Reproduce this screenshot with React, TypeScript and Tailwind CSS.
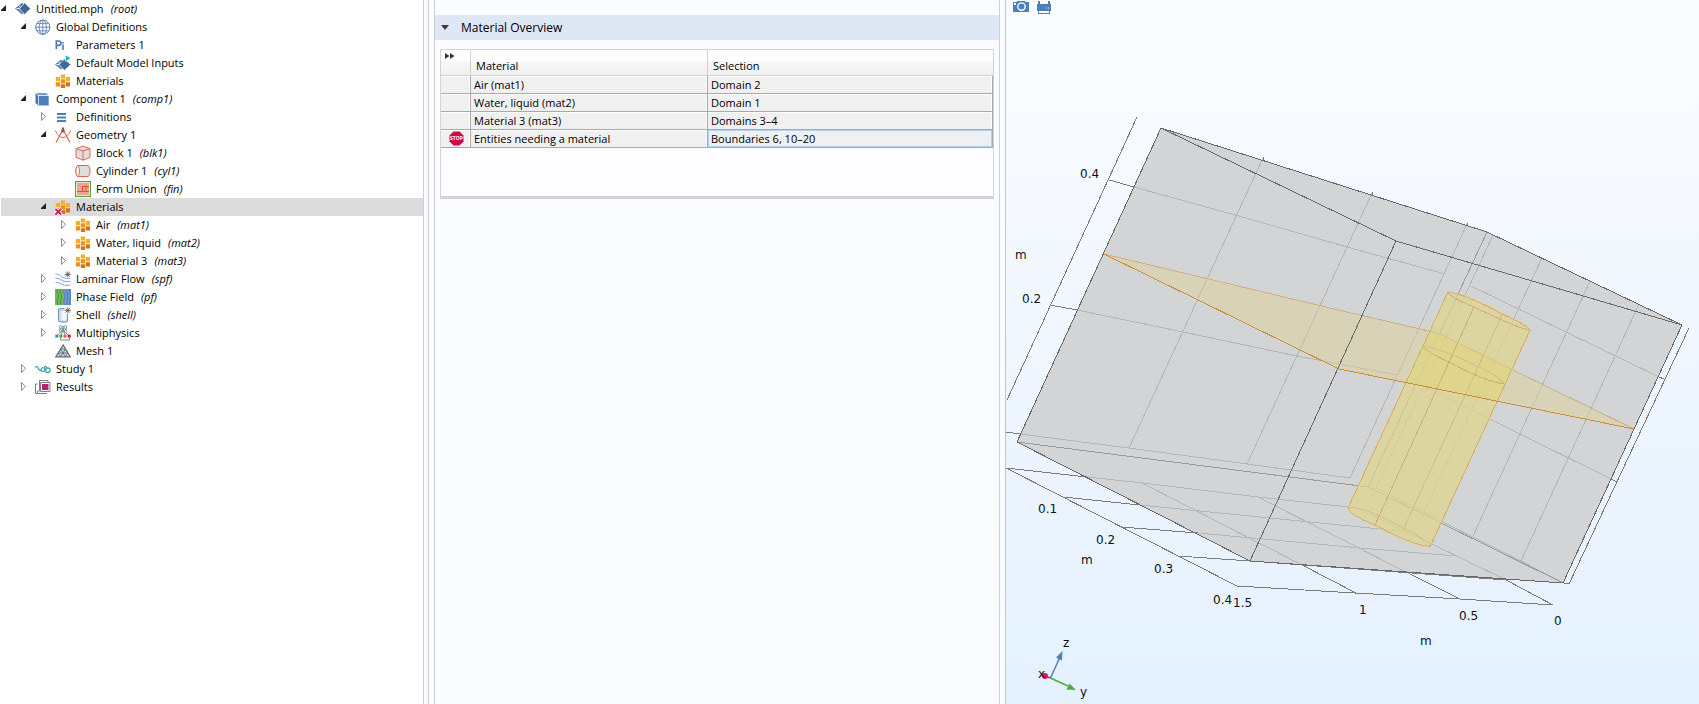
import type { ReactNode } from "react";

type NodeState = "open" | "closed" | "leaf";

interface TreeNode {
  level: 0 | 1 | 2 | 3;
  state: NodeState;
  icon: ReactNode;
  label: string;
  tag?: string;
  selected?: boolean;
}

const INDENT = ["pl-0", "pl-5", "pl-10", "pl-15"];

function Icon({ children }: { children: ReactNode }) {
  return (
    <svg aria-hidden="true" viewBox="0 0 16 16" className="size-4 shrink-0">
      {children}
    </svg>
  );
}

const RootIcon = (
  <Icon>
    <path d="M0 7.500 7 1.800l3 2.300-3.800 3.400L10 11l-3 2.600z" fill="#5d80ae" />
    <path d="M1.500 7.500h5.500M4.200 4.800l4.300 5.400" stroke="#fff" strokeWidth="1" />
    <path d="m9.600 1.800 6 5.900-6 5.900-5.200-5.900z" fill="#3f6799" stroke="#fff" strokeWidth=".7" />
  </Icon>
);

const GlobeIcon = (
  <Icon>
    <g fill="none" stroke="#6b8dba" strokeWidth="1">
      <circle cx="7.800" cy="8.200" r="7.100" stroke="#5179ae" />
      <ellipse cx="7.800" cy="8.200" rx="3.600" ry="7.100" />
      <path d="M7.800 1v14.400M.8 8.200h14M2 4.600h11.600M2 11.800h11.600" />
    </g>
  </Icon>
);

const ParametersIcon = (
  <Icon>
    <g fill="none" stroke="#4a7ab5" strokeWidth="1.600">
      <path d="M1.300 12V4h2.200c3.300 0 3.300 4.400 0 4.400H1.300" />
      <path d="M8 7.600V13" />
    </g>
    <path d="M7.200 5h1.600v1.400H7.200z" fill="#4a7ab5" />
  </Icon>
);

const ModelInputsIcon = (
  <Icon>
    <path d="M0 9.600 6.200 4.400l2.400 2L5.600 9.500l3 3-2.400 2z" fill="#5d80ae" />
    <path d="M1.500 9.500h5M4 7l3 5" stroke="#fff" />
    <path d="m9.300 4 6.400 5.600-6.400 5.700-5-5.700z" fill="#3f6799" stroke="#fff" strokeWidth=".5" />
    <path d="M10.500 0v6.600L16 3.200z" fill="#20b2c0" stroke="#fff" strokeWidth=".5" />
  </Icon>
);

function MaterialBlocks() {
  return (
    <g>
      <path d="M.8 4h4.300v4.200H.8zM5.800 1.500h4.300v4H5.800zM10.800 4H15v4.200h-4.200z" fill="#f9ae22" />
      <path d="M.8 9.200h4.300v4.200H.8zM5.800 6.300h4.300v4.200H5.800z" fill="#f08f1e" />
      <path d="M5.800 11.300h4.300V15H5.800zM10.800 9.200H15v4.200h-4.200z" fill="#cf761a" />
    </g>
  );
}

const MaterialsIcon = (
  <Icon>
    <MaterialBlocks />
  </Icon>
);

const MaterialsErrorIcon = (
  <Icon>
    <MaterialBlocks />
    <path d="M0 9.500l6.500 6.500M6.500 9.500L0 16" stroke="#fff" strokeWidth="3.600" />
    <path d="M.4 9.800l5.800 5.800M6.200 9.800L.4 15.600" stroke="#d0105a" strokeWidth="1.800" />
  </Icon>
);

const ComponentIcon = (
  <Icon>
    <path d="M.5 2h10.300l2.500 2H3.500L.5 2z" fill="#6d9bca" />
    <path d="M.5 2.500 3 4.600v9.700L.5 12z" fill="#4179b0" />
    <path d="M3.700 4.800h10v9.700h-10z" fill="#4b81bb" />
  </Icon>
);

const DefinitionsIcon = (
  <Icon>
    <path d="M2 4h9v2H2zM2 7.500h9v2H2zM2 11h9v2H2z" fill="#4b7fb8" />
  </Icon>
);

const GeometryIcon = (
  <Icon>
    <g fill="none" stroke="#e0664a" strokeWidth="1.200">
      <path d="M7.500 3.500 1 15.500M8.500 3.500 15 15.500" />
      <path d="M.5 3.500C2 8 5 10.500 8 10.500s6-2.500 7.500-7" strokeWidth="1" />
    </g>
    <path d="M7 .5h2v1.600l1 1.500L8 6 6 3.600l1-1.500z" fill="#8a5a50" />
  </Icon>
);

const BlockIcon = (
  <Icon>
    <path d="M1 3.600 8 1.200l7 2.400v8.800l-7 2.800-7-2.800z" fill="#dedede" stroke="#e0664a" strokeWidth="1" />
    <path d="M1 3.600 8 6l7-2.400M8 6v9.200" fill="none" stroke="#e0664a" strokeWidth="1" />
  </Icon>
);

const CylinderIcon = (
  <Icon>
    <path d="M2.700 2.500h10.600c2.300 2.500 2.300 8.500 0 11H2.700C.2 11 .2 5 2.700 2.500z" fill="#dedede" stroke="#e0664a" strokeWidth="1" />
    <path d="M2.700 2.500c2.400 2.500 2.400 8.500 0 11C.2 11 .2 5 2.700 2.500z" fill="#fff" stroke="#e0664a" strokeWidth="1" />
  </Icon>
);

const UnionIcon = (
  <Icon>
    <path d="M.6.6h14.800v14.800H.6z" fill="#fff" stroke="#56a63f" strokeWidth="1.200" />
    <path d="M2 2h12v12H2z" fill="#f0a593" />
    <path d="M14 5.500H7.500v5H14M2 10.500h9V4.500" fill="none" stroke="#dd5238" strokeWidth="1" />
  </Icon>
);

const AsteriskMark = (
  <path
    d="M12.800.4v6M10.600 1.300l4.300 4.200M10.600 5.500l4.300-4.200M9.700 3.400h6.200"
    stroke="#5a5a5a"
    strokeWidth=".9"
  />
);

const LaminarIcon = (
  <Icon>
    <g fill="none" stroke="#7fa9dc" strokeWidth="1">
      <path d="M.5 3c4-.4 5 3 8.500 4 2 .6 4 .8 6.500.3M.5 7.300c4-.6 5 2.200 8.500 3 2 .4 4 .4 6.500 0M.5 11.500c4-.6 5 1.800 8.500 2.600 2 .4 4 .4 6.500 0" />
    </g>
    {AsteriskMark}
  </Icon>
);

const PhaseIcon = (
  <Icon>
    <path d="M0 0h9c-3 4 2 5 0 9-1 3-1 4 0 7H0z" fill="#6ebb59" />
    <path d="M9 0h7v16H9c-1-3-1-4 0-7 2-4-3-5 0-9z" fill="#6d9bd6" />
    <g fill="none" strokeWidth=".8">
      <path d="M3 0c-3 4 2 5 0 9-1 3-1 4 0 7M6.200 0c-3 4 2 5 0 9-1 3-1 4 0 7" stroke="#3d7f3a" />
      <path d="M9.400 0c-3 4 2 5 0 9-1 3-1 4 0 7M12.500 0c-3 4 2 5 0 9-1 3-1 4 0 7M15.300 0c-3 4 2 5 0 9-1 3-1 4 0 7" stroke="#44699f" />
    </g>
  </Icon>
);

const ShellIcon = (
  <Icon>
    <path d="M3.500 3c0-2.200 9-2.200 9 0v10.500c0 2.200-9 2.200-9 0z" fill="#cfdcec" stroke="#7898c2" strokeWidth="1.200" />
    <path d="M6.500 4v8c1.500 2 4 1.500 5.200.5V4z" fill="#f4f8fd" />
    <path d="M9.500 0H16v7H9.500z" fill="#fff" />
    {AsteriskMark}
  </Icon>
);

const MultiphysicsIcon = (
  <Icon>
    <g fill="none" stroke="#7f8b93" strokeWidth=".9">
      <ellipse cx="8" cy="4" rx="4.500" ry="2" transform="rotate(35 8 4)" />
      <ellipse cx="8" cy="4" rx="4.500" ry="2" transform="rotate(-35 8 4)" />
      <path d="M8 5 1.800 11M8 5 6 11M8 5l2.500 6M8 5l6 6" />
    </g>
    <circle cx="8" cy="4" r="1.500" fill="#5aa08c" />
    <path d="M.3 9.600h3v3h-3z" fill="#4b80c0" />
    <path d="M4.400 9.600h3v3h-3z" fill="#4ea53e" />
    <path d="M8.500 9.600h3v3h-3z" fill="#e5603c" />
    <path d="M12.700 9.600h3v3h-3z" fill="#d0105a" />
    <path d="M5.500 13v2h9v-2" fill="none" stroke="#777" strokeWidth=".9" />
  </Icon>
);

const MeshIcon = (
  <Icon>
    <path d="M8 2 .8 13.800h14.400z" fill="#d9dee2" stroke="#5b6873" strokeWidth="1.200" />
    <path d="M5.600 6h4.800L12.800 10H3.200zM5.600 6 8 10l2.400-4M3.200 10l2.400 3.800L8 10l2.400 3.800 2.400-3.800" fill="none" stroke="#5b6873" strokeWidth=".9" />
  </Icon>
);

const StudyIcon = (
  <Icon>
    <g fill="none" stroke="#2d9fae" strokeWidth="1.100">
      <path d="M0 6.500c2-2 3-.5 3.500 1S5.500 10 6.500 9" />
      <circle cx="7.900" cy="8.700" r="1.900" />
      <circle cx="12.800" cy="9.200" r="2.300" />
      <path d="M9 7c.6-2.200 3-2.200 2.600.4" />
    </g>
  </Icon>
);

const ResultsIcon = (
  <Icon>
    <g fill="#fff" stroke="#7d7d7d" strokeWidth="1">
      <path d="M5 1.500h-.5V12H2.500v2.500H12M2.500 5H.5v9.500h2" />
      <path d="M4.500 1.500h8.500v8.500H4.500z" />
      <path d="M5.500 3.500h9.500v9H5.500z" />
    </g>
    <path d="M7 5h6.500v6H7z" fill="#b3246c" />
  </Icon>
);

const NODES: TreeNode[] = [
  { level: 0, state: "open", icon: RootIcon, label: "Untitled.mph", tag: "(root)" },
  { level: 1, state: "open", icon: GlobeIcon, label: "Global Definitions" },
  { level: 2, state: "leaf", icon: ParametersIcon, label: "Parameters 1" },
  { level: 2, state: "leaf", icon: ModelInputsIcon, label: "Default Model Inputs" },
  { level: 2, state: "leaf", icon: MaterialsIcon, label: "Materials" },
  { level: 1, state: "open", icon: ComponentIcon, label: "Component 1", tag: "(comp1)" },
  { level: 2, state: "closed", icon: DefinitionsIcon, label: "Definitions" },
  { level: 2, state: "open", icon: GeometryIcon, label: "Geometry 1" },
  { level: 3, state: "leaf", icon: BlockIcon, label: "Block 1", tag: "(blk1)" },
  { level: 3, state: "leaf", icon: CylinderIcon, label: "Cylinder 1", tag: "(cyl1)" },
  { level: 3, state: "leaf", icon: UnionIcon, label: "Form Union", tag: "(fin)" },
  { level: 2, state: "open", icon: MaterialsErrorIcon, label: "Materials", selected: true },
  { level: 3, state: "closed", icon: MaterialsIcon, label: "Air", tag: "(mat1)" },
  { level: 3, state: "closed", icon: MaterialsIcon, label: "Water, liquid", tag: "(mat2)" },
  { level: 3, state: "closed", icon: MaterialsIcon, label: "Material 3", tag: "(mat3)" },
  { level: 2, state: "closed", icon: LaminarIcon, label: "Laminar Flow", tag: "(spf)" },
  { level: 2, state: "closed", icon: PhaseIcon, label: "Phase Field", tag: "(pf)" },
  { level: 2, state: "closed", icon: ShellIcon, label: "Shell", tag: "(shell)" },
  { level: 2, state: "closed", icon: MultiphysicsIcon, label: "Multiphysics" },
  { level: 2, state: "leaf", icon: MeshIcon, label: "Mesh 1" },
  { level: 1, state: "closed", icon: StudyIcon, label: "Study 1" },
  { level: 1, state: "closed", icon: ResultsIcon, label: "Results" },
];

function Twisty({ state, label }: { state: NodeState; label: string }) {
  if (state === "leaf") return <span className="w-3.5 shrink-0" />;
  return (
    <button type="button" aria-label={`Toggle ${label}`} className="h-[18px] w-3.5 shrink-0">
      <svg viewBox="0 0 14 18" className="h-[18px] w-3.5">
        {state === "open" ? (
          <path d="M5 5v6H-1z" fill="#222" />
        ) : (
          <path d="M.5 4.500v8l4-4z" fill="#fff" stroke="#8c8c8c" />
        )}
      </svg>
    </button>
  );
}

function ModelTree() {
  return (
    <nav aria-label="Model tree" className="w-[424px] shrink-0 overflow-hidden border-r border-[#cfcfd3] bg-white pl-px">
      <ul role="tree">
        {NODES.map((n, i) => (
          <li
            key={i}
            role="treeitem"
            aria-selected={!!n.selected}
            className={`flex h-[18px] items-center text-[11px] leading-[18px] whitespace-nowrap text-black ${INDENT[n.level]} ${n.selected ? "bg-[#dbdbdb]" : ""}`}
          >
            <Twisty state={n.state} label={n.label} />
            {n.icon}
            <span className="ml-[5px]">{n.label}</span>
            {n.tag && <em className="ml-[7px]">{n.tag}</em>}
          </li>
        ))}
      </ul>
    </nav>
  );
}

const ROWS = [
  { material: "Air (mat1)", selection: "Domain 2" },
  { material: "Water, liquid (mat2)", selection: "Domain 1" },
  { material: "Material 3 (mat3)", selection: "Domains 3–4" },
  { material: "Entities needing a material", selection: "Boundaries 6, 10–20", stop: true },
];

const CELL =
  "h-[18px] overflow-hidden border-r border-b border-[#a9a9a9] bg-[#f0f0f0] p-0 pl-[3px] leading-4 shadow-[inset_-1px_1px_0_#fff]";

function StopIcon() {
  return (
    <svg role="img" aria-label="Missing material" viewBox="0 0 15 15" className="ml-[5px] size-[15px]">
      <path d="M4.500.5h6l4 4v6l-4 4h-6l-4-4v-6z" fill="#d0094a" />
      <text x="7.500" y="9.400" textAnchor="middle" fontSize="5" fontWeight="700" fill="#fff">
        STOP
      </text>
    </svg>
  );
}

function MaterialOverview() {
  return (
    <section className="ml-[5px] w-[566px] shrink-0 border-x border-[#cfcfd6] bg-[#fbfcff] pt-[15px]">
      <h2 className="bg-[#dee8f4]">
        <button type="button" aria-expanded="true" className="flex h-[25px] w-full items-center pl-1.5 text-xs">
          <svg aria-hidden="true" viewBox="0 0 8 5" className="h-[5px] w-2">
            <path d="M0 0h8L4 5z" fill="#3c3c3c" />
          </svg>
          <span className="ml-3">Material Overview</span>
        </button>
      </h2>
      <div className="mx-[5px] mt-[9px] min-h-[150px] border border-b-[3px] border-[#d3d3d5] bg-[#fdfdff]">
        <table className="w-full table-fixed border-separate border-spacing-0 text-[11px] text-black">
          <colgroup>
            <col className="w-[30px]" />
            <col className="w-[237px]" />
            <col />
          </colgroup>
          <thead>
            <tr className="bg-linear-to-b from-white from-40% via-[#f8f8f9] via-42% to-[#f0f0f1]">
              <th scope="col" aria-label="Status" className="h-[26px] border-r border-b border-[#d0d0d3] p-0 pl-1 align-top">
                <svg aria-hidden="true" viewBox="0 0 10 6" className="mt-[3px] h-1.5 w-2.5">
                  <path d="M0 0l4.500 3L0 6zM5 0l4.500 3L5 6z" fill="#333" />
                </svg>
              </th>
              <th scope="col" className="h-[26px] border-r border-b border-[#d0d0d3] p-0 pt-1.5 pl-[5px] text-left leading-4 font-normal">
                Material
              </th>
              <th scope="col" className="h-[26px] border-b border-[#d0d0d3] p-0 pt-1.5 pl-[5px] text-left leading-4 font-normal">
                Selection
              </th>
            </tr>
          </thead>
          <tbody>
            {ROWS.map((r) => (
              <tr key={r.material}>
                <td className={CELL}>{r.stop && <StopIcon />}</td>
                <td className={CELL}>{r.material}</td>
                <td
                  className={
                    r.stop
                      ? "h-[18px] border-r border-b border-[#a9a9a9] bg-[#f0f0f0] p-0 pl-[3px] leading-4 shadow-[inset_0_0_0_1px_#a9d4f5]"
                      : CELL
                  }
                >
                  {r.selection}
                </td>
              </tr>
            ))}
          </tbody>
        </table>
      </div>
    </section>
  );
}

const LABELS: [number, number, string][] = [
  [1080, 178, "0.4"],
  [1015, 259, "m"],
  [1022, 303, "0.2"],
  [1038, 513, "0.1"],
  [1096, 544, "0.2"],
  [1081, 564, "m"],
  [1154, 573, "0.3"],
  [1213, 604, "0.4"],
  [1233, 607, "1.5"],
  [1359, 614, "1"],
  [1459, 620, "0.5"],
  [1554, 625, "0"],
  [1420, 645, "m"],
  [1063, 647, "z"],
  [1038, 678, "x"],
  [1080, 696, "y"],
];

const GRID = [
  "M1263 158 1129 448",
  "M1372 193 1247 464",
  "M1467 224 1350 478",
  "M1134 187 1237 215.500 1347 247 1445 274",
  "M1077 310 1183 332 1297 356 1397 375",
  "M1020 434 1129 448 1247 464 1350 478",
  "M1493 235 1376 488",
  "M1542 258 1424 512",
  "M1590 281 1473 536",
  "M1639 304 1521 561",
  "M1471 286 1659 377",
  "M1430 389 1520 434 1611 479",
  "M1376 488 1564 583",
  "M1087 477 1143 483 1258 497 1357 508",
  "M1140 505 1360 527 1410 532",
  "M1198 533 1360 548 1456 556",
  "M1142 483 1302 565",
  "M1258 497 1410 574",
  "M1357 508 1432 544 1506 580",
].join("");

const AXES = [
  "M1137 117 1007 400",
  "M1109 180 1134 187",
  "M1050 305 1077 310",
  "M1006 432 1020 434",
  "M1263 157v3M1372 192v4M1467 223v3",
  "M1689 328 1569 584 1564 583",
  "M1659 377 1664 379",
  "M1611 479 1617 482",
  "M1006 468 1237 586 1355 593 1460 599 1553 605",
  "M1006 468 1087 477",
  "M1063 497 1140 505",
  "M1121 527 1198 533",
  "M1178 556 1250 561 1506 580",
  "M1302 565 1356 593",
  "M1410 574 1460 599",
  "M1506 580 1553 605",
].join("");

function Scene() {
  return (
    <svg
      role="img"
      aria-label="Geometry view"
      viewBox="1006 0 693 704"
      preserveAspectRatio="xMinYMin meet"
      className="block h-full w-full"
      fontFamily="'DejaVu Sans', sans-serif"
    >
      <g fill="none" shapeRendering="crispEdges">
        <path d="M1161 128 1487 232 1682 325 1563 583 1250 561 1017 442z" fill="#d3d4d6" />
        <path d={GRID} stroke="#b4b5b7" />
        <path d="M1487 232 1368 487M1017 442 1368 487 1563 583" stroke="#999a9c" />
        <path d={AXES} stroke="#7c7c7c" />
        <path d="M1104 254 1339 369 1634 429 1440 334z" fill="#dfd08a" fillOpacity=".42" />
        <path
          d="M1448 292Q1466 293 1503 313Q1530 326 1530 331L1430 547Q1416 547 1375 526Q1349 514 1348 508z"
          fill="#e0d58c"
          fillOpacity=".74"
          stroke="#e1d690"
          strokeOpacity=".6"
          strokeWidth="2"
        />
        <path d="M1428 337 1440 334 1513 370 1495 401 1408 383z" fill="#e0d56c" fillOpacity=".25" />
        <g stroke="#d3bd86">
          <path d="M1502 315 1403 530" />
          <path d="M1423 346Q1440 348 1477 366Q1499 376 1504 384" />
          <path d="M1348 508Q1362 505 1403 528Q1428 540 1430 546" />
        </g>
        <path d="M1104 254 1347 312 1433 332" stroke="#d0af86" />
        <path d="M1433 332 1440 334 1513 370" stroke="#d6c080" />
        <path d="M1513 370 1634 429" stroke="#d0af86" />
        <g stroke="#ceb075">
          <path d="M1448 292 1348 508M1530 330 1430 547M1474 307 1375 525" />
          <path d="M1448 292Q1465 294 1502 314Q1527 325 1530 330Q1517 328 1474 307Q1452 298 1448 293" />
          <path d="M1423 347Q1429 353 1451 363Q1484 381 1504 384" />
          <path d="M1348 508Q1350 515 1375 525Q1416 547 1430 546" />
        </g>
        <path d="M1104 254 1339 369 1634 429" stroke="#c98f3c" />
        <path
          d="M1017 442 1161 128 1487 232 1682 325 1563 583M1161 128 1396 241 1682 325M1396 241 1250 561M1017 442 1250 561 1563 583"
          stroke="#67686a"
        />
      </g>
      <g fill="none" strokeWidth="1.500">
        <path d="M1050.500 678 1060 657" stroke="#4b84bd" />
        <path d="M1050.500 678 1068 686" stroke="#51a840" />
        <path d="M1050.500 678 1045 676" stroke="#d81b5c" />
      </g>
      <path d="M1062.500 651 1062 660.500 1056 657.500z" fill="#4b84bd" />
      <path d="M1076 690 1066.500 689.500 1069.500 683.500z" fill="#51a840" />
      <circle cx="1045" cy="676" r="3" fill="#d81b5c" />
      <g fontSize="12" fill="#111">
        {LABELS.map(([x, y, t]) => (
          <text key={`${x}-${y}`} x={x} y={y}>
            {t}
          </text>
        ))}
      </g>
    </svg>
  );
}

function GraphicsView() {
  return (
    <main className="relative ml-[5px] min-w-0 flex-1 overflow-hidden border-l border-[#a3cdf0] bg-linear-to-b from-[#fbfcff] to-[#e4f1fe]">
      <Scene />
      <div role="toolbar" aria-label="Graphics" className="absolute top-0 left-[7px] flex gap-2">
        <button type="button" aria-label="Image snapshot" className="h-3.5 w-4">
          <svg viewBox="0 0 16 14" className="h-3.5 w-4">
            <path d="M0 2h4V1h8v1h4v10H0z" fill="#4b81bb" />
            <path d="M1 3h2v2H1z" fill="#fff" />
            <circle cx="8.500" cy="6.600" r="3.700" fill="#4b81bb" stroke="#fff" strokeWidth="1.400" />
          </svg>
        </button>
        <button type="button" aria-label="Print" className="h-3.5 w-3.5">
          <svg viewBox="0 0 14 14" className="h-3.5 w-3.5">
            <path d="M1 1h2v3h8V1h2v3h1v7h-1v3H1v-3H0V4h1z" fill="#4b81bb" />
            <path d="M2 11h10v2H2zM9 7.500h1v1H9zM11 7.500h1v1h-1z" fill="#fff" />
          </svg>
        </button>
      </div>
    </main>
  );
}

export default function App() {
  return (
    <div className="flex h-screen overflow-hidden bg-[#fbfcff] font-['Open_Sans',sans-serif] text-black">
      <ModelTree />
      <div className="ml-1 flex shrink-0 border-l border-[#cfcfd6]">
        <MaterialOverview />
      </div>
      <GraphicsView />
    </div>
  );
}
